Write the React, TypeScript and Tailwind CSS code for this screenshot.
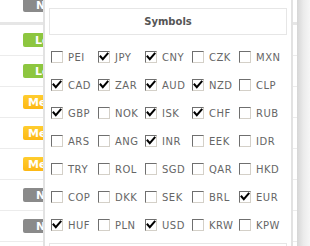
import React from "react";

type Badge = { label: string; tone: "none" | "low" | "med" };

const rows: Badge[] = [
  { label: "Low", tone: "low" },
  { label: "Low", tone: "low" },
  { label: "Medium", tone: "med" },
  { label: "Medium", tone: "med" },
  { label: "Medium", tone: "med" },
  { label: "None", tone: "none" },
  { label: "None", tone: "none" },
];

const symbols: [string, boolean][] = [
  ["PEI", false], ["JPY", true], ["CNY", true], ["CZK", false], ["MXN", false],
  ["CAD", true], ["ZAR", true], ["AUD", true], ["NZD", true], ["CLP", false],
  ["GBP", true], ["NOK", false], ["ISK", true], ["CHF", true], ["RUB", false],
  ["ARS", false], ["ANG", false], ["INR", true], ["EEK", false], ["IDR", false],
  ["TRY", false], ["ROL", false], ["SGD", false], ["QAR", false], ["HKD", false],
  ["COP", false], ["DKK", false], ["SEK", false], ["BRL", false], ["EUR", true],
  ["HUF", true], ["PLN", false], ["USD", true], ["KRW", false], ["KPW", false],
];

function RiskBadge({ label, tone }: Badge) {
  const color =
    tone === "low"
      ? "bg-[#8dc63f] pl-[12px]"
      : tone === "med"
        ? "bg-gradient-to-b from-[#ffcd2e] to-[#fdb813] pl-[5px]"
        : "bg-[#8a8a8a] pl-[13px]";
  return (
    <span
      className={`flex h-[14px] w-[60px] items-center overflow-hidden rounded-[2px] text-[11px] font-bold leading-none text-white ${color}`}
    >
      {label}
    </span>
  );
}

function Check({ checked }: { checked: boolean }) {
  return (
    <span className="flex h-[12px] w-[12px] shrink-0 items-center justify-center border border-t-[#6f6f6f] border-l-[#6f6f6f] border-r-[#d4d0c8] border-b-[#d4d0c8] bg-white">
      {checked && (
        <svg width="10" height="10" viewBox="0 0 10 10" fill="none">
          <path d="M1.5 4.5 L3.8 7.2 L8.6 1.6" stroke="#000" strokeWidth="2" strokeLinecap="square" />
        </svg>
      )}
    </span>
  );
}

export default function App() {
  return (
    <div
      className="relative h-[246px] w-[310px] overflow-hidden bg-white"
      style={{ fontFamily: '"DejaVu Sans", Verdana, sans-serif' }}
    >
      <div className="flex h-full">
        {/* page behind the popup */}
        <div className="flex w-[297px] flex-col">
          <div className="flex h-[22px] items-start pl-[23px]">
            <div className="-mt-[2px]">
              <RiskBadge label="None" tone="none" />
            </div>
          </div>
          <div className="h-[3px] bg-[#e6e6e6]" />
          {rows.map((r, i) => (
            <div key={i} className="flex h-[31px] shrink-0 items-center border-b border-[#ececec] pl-[23px]">
              <RiskBadge {...r} />
            </div>
          ))}
        </div>
        <div className="w-[13px] bg-gradient-to-r from-[#d6d6d6] via-[#ebebeb] to-[#f6f6f6]" />
      </div>

      {/* symbols popup */}
      <div className="absolute left-[43px] top-0 h-[260px] w-[250px] border-x-2 border-[#e2e2e2] bg-white px-[4px] pt-[8px]">
        <div className="flex h-[27px] items-center justify-center border border-[#e6e6e6] text-[10px] font-bold text-[#555]">
          Symbols
        </div>
        <div className="mt-[8px] grid grid-cols-[repeat(5,47px)] pl-[2px]">
          {symbols.map(([code, on]) => (
            <label key={code} className="flex h-[28px] items-center gap-[5px]">
              <Check checked={on} />
              <span className="text-[10px] tracking-[0.5px] text-[#666]">{code}</span>
            </label>
          ))}
        </div>
        <div className="mt-[4px] h-[30px] border border-[#e6e6e6]" />
      </div>
    </div>
  );
}
